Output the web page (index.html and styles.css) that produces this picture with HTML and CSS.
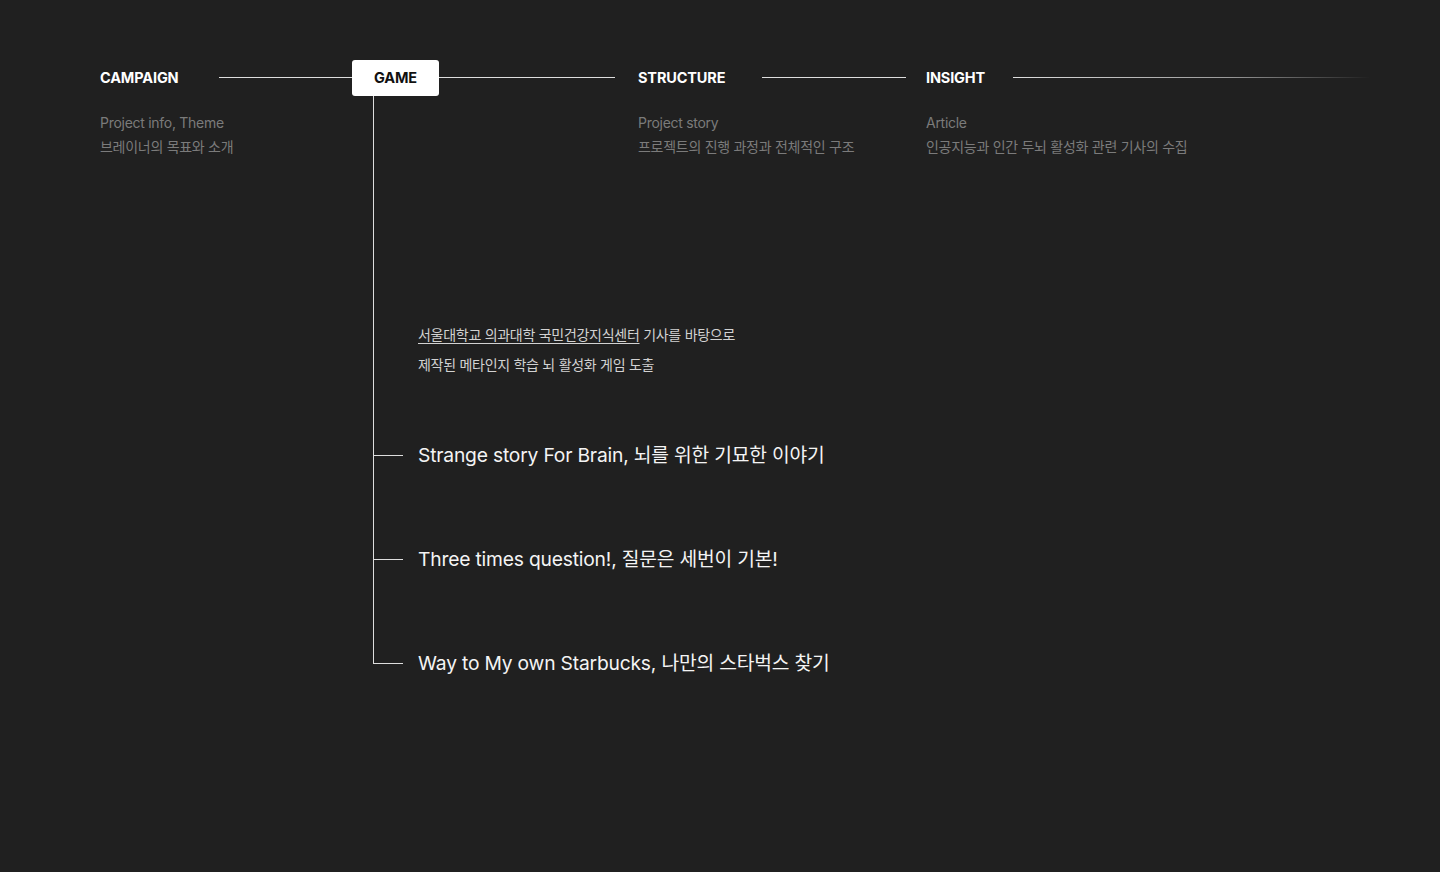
FILE: index.html
```html
<!DOCTYPE html>
<html lang="ko">
<head>
<meta charset="utf-8">
<title>Brainer</title>
<link rel="stylesheet" href="styles.css">
</head>
<body>
<div class="page">
  <nav class="steps">
    <section class="step step-campaign">
      <div class="head">
        <span class="label">CAMPAIGN</span>
        <span class="line"></span>
      </div>
      <div class="sub">
        <p>Project info, Theme</p>
        <p>브레이너의 목표와 소개</p>
      </div>
    </section>
    <section class="step step-game">
      <div class="head">
        <span class="box">GAME</span>
        <span class="line"></span>
      </div>
      <div class="tree">
        <p class="intro"><span class="ref">서울대학교 의과대학 국민건강지식센터</span> 기사를 바탕으로<br>제작된 메타인지 학습 뇌 활성화 게임 도출</p>
        <ul class="games">
          <li>Strange story For Brain, 뇌를 위한 기묘한 이야기</li>
          <li>Three times question!, 질문은 세번이 기본!</li>
          <li>Way to My own Starbucks, 나만의 스타벅스 찾기</li>
        </ul>
      </div>
    </section>
    <section class="step step-structure">
      <div class="head">
        <span class="label">STRUCTURE</span>
        <span class="line"></span>
      </div>
      <div class="sub">
        <p>Project story</p>
        <p>프로젝트의 진행 과정과 전체적인 구조</p>
      </div>
    </section>
    <section class="step step-insight">
      <div class="head">
        <span class="label">INSIGHT</span>
        <span class="line fade"></span>
      </div>
      <div class="sub">
        <p>Article</p>
        <p>인공지능과 인간 두뇌 활성화 관련 기사의 수집</p>
      </div>
    </section>
  </nav>
</div>
</body>
</html>
```

FILE: styles.css
```css
html, body {
  margin: 0;
  padding: 0;
  background: #202020;
}

body {
  font-family: Inter, "Noto Sans CJK KR", sans-serif;
  color: #fff;
  min-height: 872px;
}

p { margin: 0; }

.page {
  padding: 60px 0 0 100px;
}

.steps {
  display: grid;
  grid-template-columns: 252px 286px 288px 444px;
  align-items: start;
}

.head {
  display: flex;
  align-items: center;
  height: 36px;
}

.label {
  font-size: 14.5px;
  font-weight: 700;
  letter-spacing: -0.01em;
  color: #fff;
  line-height: 34px;
}

.line {
  flex: 1;
  height: 1px;
  margin-top: -2px;
  background: #dedede;
}

.step-campaign .line { margin-left: 40px; }
.step-game .head { margin-right: 23px; }
.step-structure .label { margin-right: 37px; }
.step-structure .head { margin-right: 20px; }
.step-insight .label { margin-right: 28px; }

.line.fade {
  background: linear-gradient(90deg, #dedede 0%, #9a9a9a 60%, rgba(32,32,32,0) 100%);
}

.box {
  width: 87px;
  height: 36px;
  box-sizing: border-box;
  display: flex;
  align-items: center;
  justify-content: center;
  padding-bottom: 1px;
  background: #fff;
  color: #111;
  border-radius: 3px;
  font-size: 14.5px;
  font-weight: 700;
  letter-spacing: -0.01em;
}

.sub {
  margin-top: 15px;
  font-size: 14px;
  line-height: 24px;
  color: #7b7b7b;
  letter-spacing: -0.02em;
}

.tree {
  position: relative;
  margin-left: 21px;
  padding: 224px 0 0 45px;
}

.tree::before {
  content: "";
  position: absolute;
  left: 0;
  top: 0;
  bottom: 15px;
  width: 1px;
  background: #dedede;
}

.intro {
  font-size: 14px;
  line-height: 30px;
  color: #d2d2d2;
  letter-spacing: -0.02em;
  white-space: nowrap;
}

.ref {
  text-decoration: underline;
  text-underline-offset: 3px;
  text-decoration-thickness: 1px;
}

.games {
  list-style: none;
  margin: 60px 0 0;
  padding: 0;
  display: flex;
  flex-direction: column;
  gap: 74px;
}

.games li {
  position: relative;
  font-size: 19.25px;
  line-height: 30px;
  color: #f4f4f4;
  white-space: nowrap;
  letter-spacing: -0.01em;
}

.games li::before {
  content: "";
  position: absolute;
  left: -45px;
  top: 15px;
  width: 30px;
  height: 1px;
  background: #dedede;
}
```
